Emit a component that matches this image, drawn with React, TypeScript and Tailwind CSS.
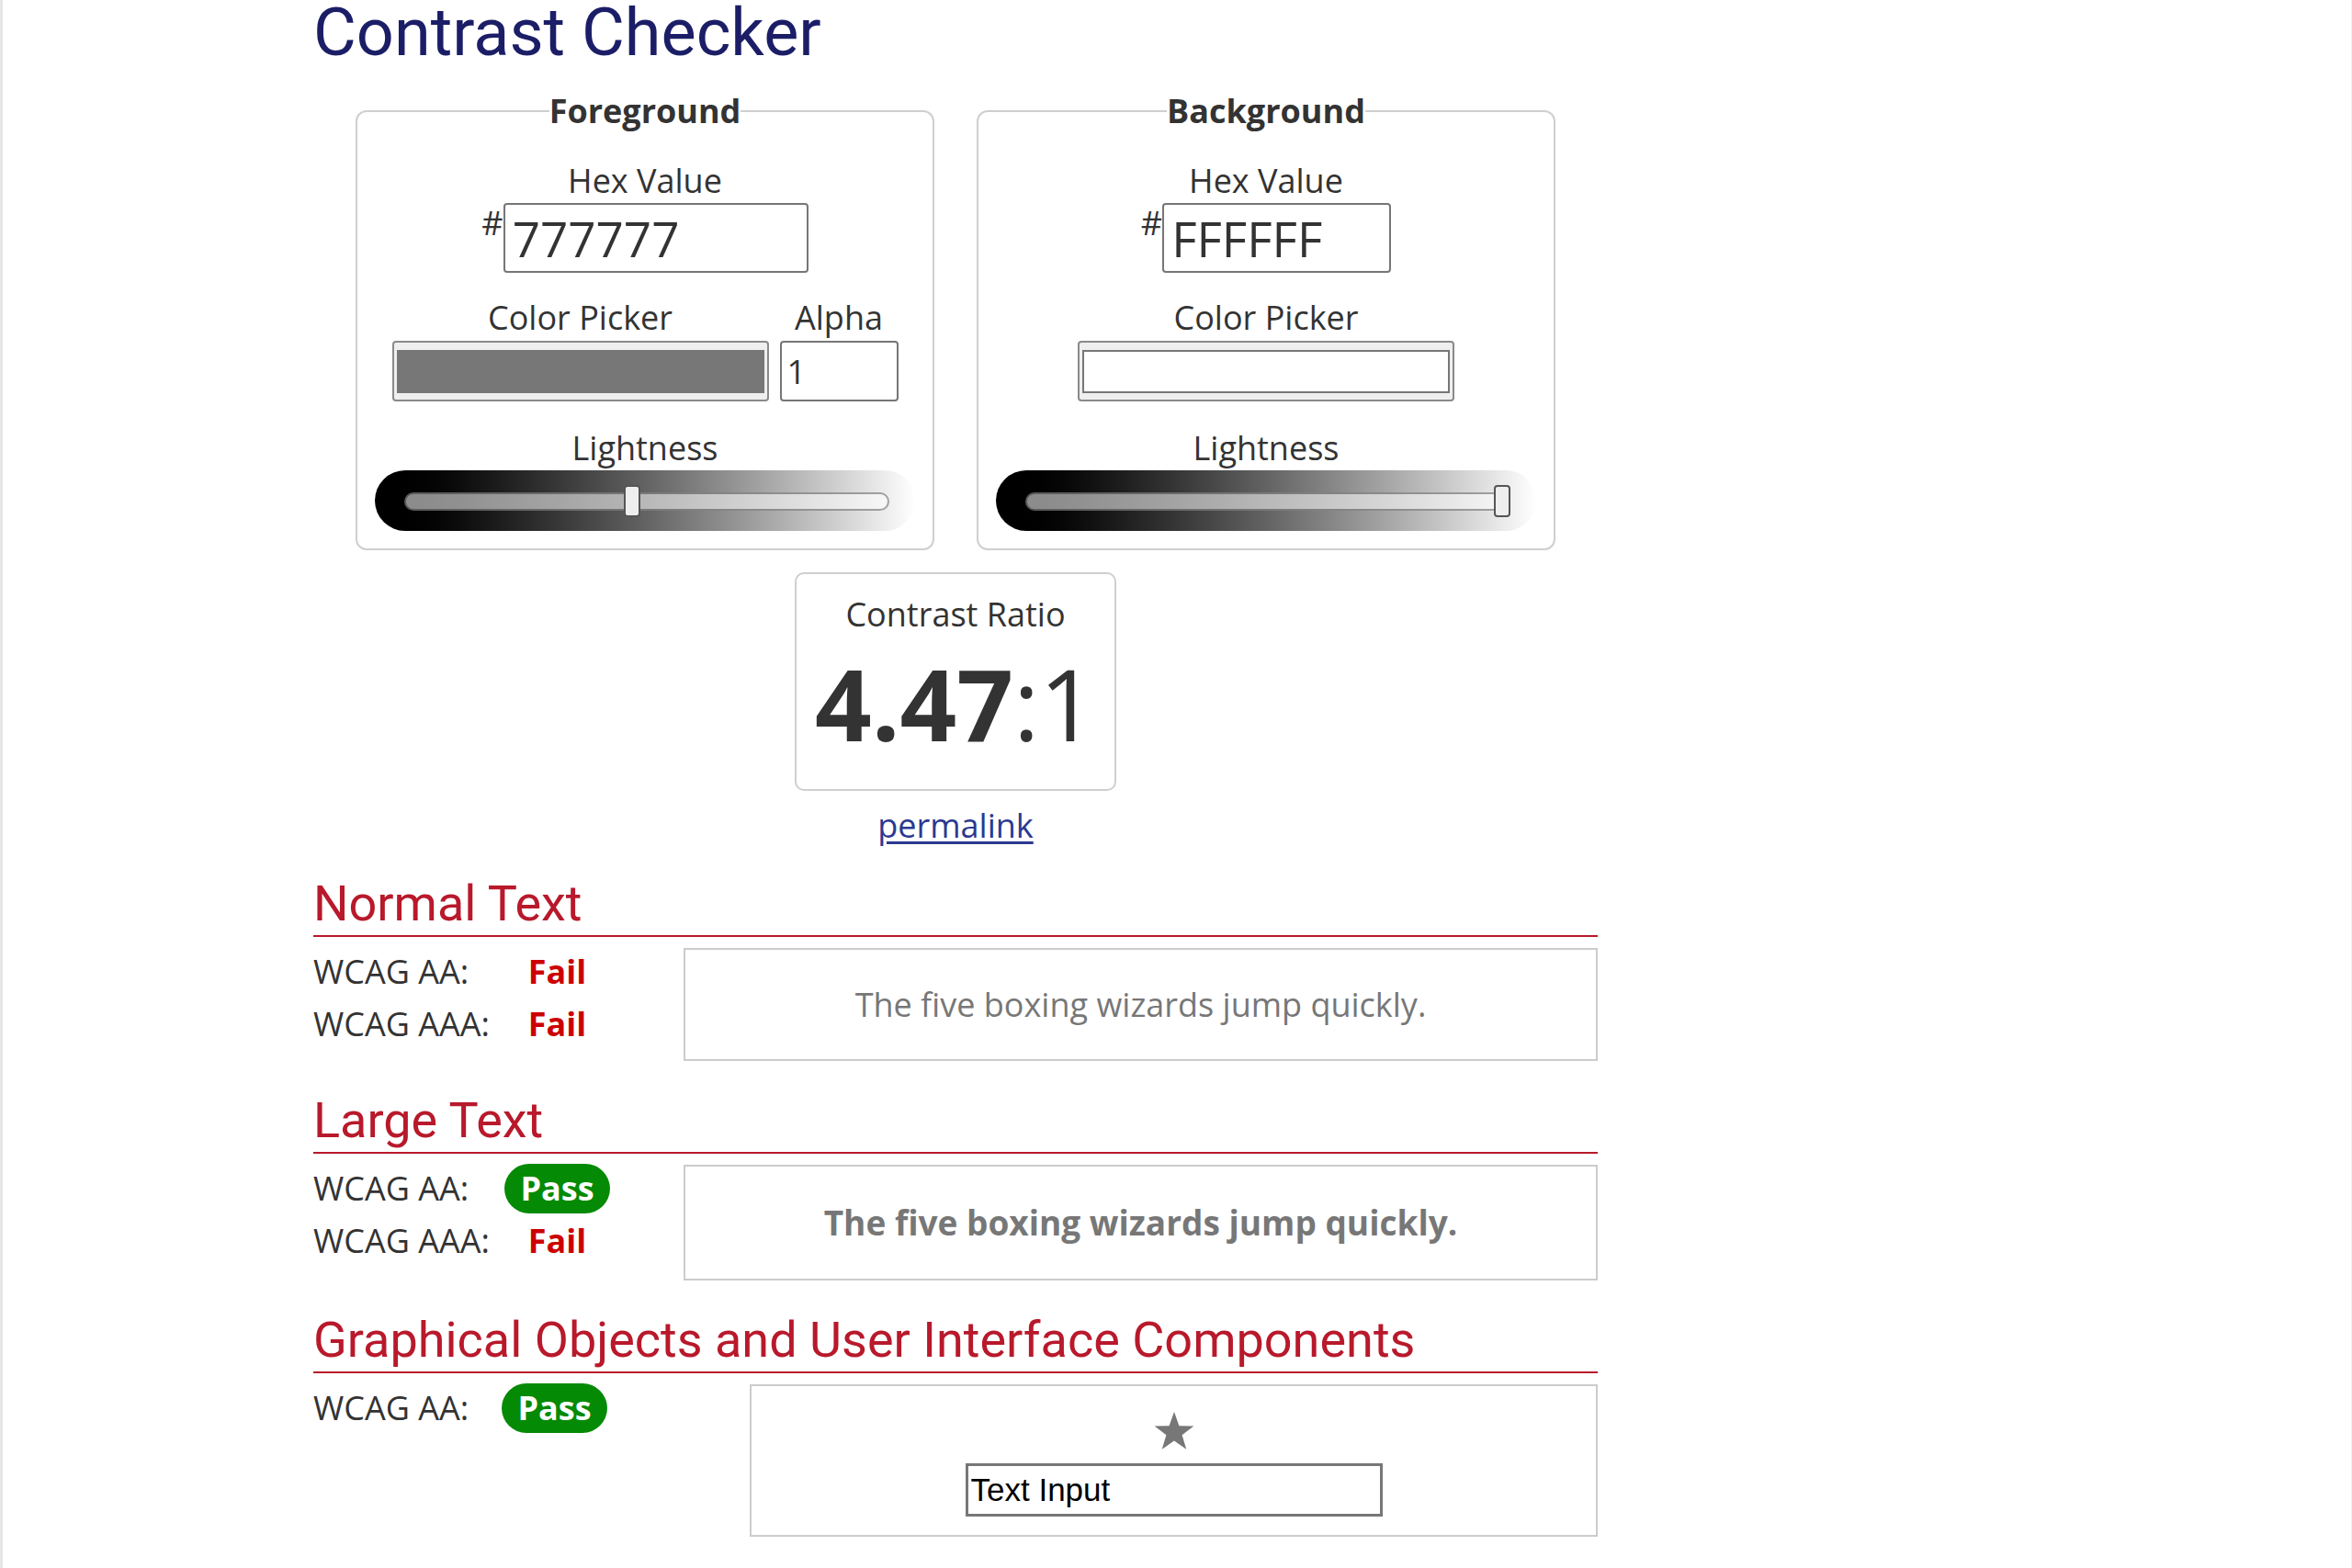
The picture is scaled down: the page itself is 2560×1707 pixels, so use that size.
import type { ReactNode } from 'react';

type PanelProps = {
  title: string;
  hex: string;
  hexWidth: number;
  lightness: number;
  showAlpha?: boolean;
};

const RED = 'text-[#b8192b]';

// Gradient lightness slider with a translucent track and a thumb placed from the value
function LightnessSlider({ value }: { value: number }) {
  return (
    <div className="h-[66px] w-full rounded-full bg-linear-to-r from-black to-white pl-[32px] pr-[28px] pt-[24px]">
      <div className="relative h-[20px] rounded-full border-2 border-black/35 bg-white/55">
        <div
          className="absolute top-[-10px] h-[35px] w-[18px] rounded-[4px] border-2 border-[#555] bg-[#eee]"
          style={{ left: `calc((100% - 16px) * ${value})` }}
        />
      </div>
    </div>
  );
}

function ColorPanel({ title, hex, hexWidth, lightness, showAlpha }: PanelProps) {
  return (
    <fieldset className="w-[630px] rounded-[12px] border-2 border-[#cfcfcf] px-[19px] pb-[19px] pt-[33px]">
      <legend className="mx-auto px-0 text-[36px] font-bold leading-[44px] text-[#333]">{title}</legend>
      <div className="flex flex-col items-center">
        <label className="leading-[41px]">Hex Value</label>
        <div className="mt-[4px] flex items-start">
          <span className="mt-[1px] leading-[41px]">#</span>
          <input
            readOnly
            value={hex}
            className="h-[76px] rounded-[4px] border-2 border-[#767676] bg-white pl-[8px] text-[53px] leading-none text-[#333] outline-none"
            style={{ width: hexWidth }}
          />
        </div>

        <div className="mt-[28px] flex gap-[12px]">
          <div className="flex flex-col items-center">
            <span className="leading-[41px]">Color Picker</span>
            <div className="mt-[5px] flex h-[66px] w-[410px] items-center rounded-[4px] border-2 border-[#8a8a8a] bg-[#efefef] px-[3px]">
              <div className="h-[47px] w-full border-2 border-[#777]" style={{ backgroundColor: `#${hex}` }} />
            </div>
          </div>
          {showAlpha && (
            <div className="flex flex-col items-center">
              <span className="leading-[41px]">Alpha</span>
              <input
                readOnly
                value="1"
                className="mt-[5px] h-[66px] w-[129px] rounded-[4px] border-2 border-[#767676] bg-white pl-[6px] text-[36px] text-[#333] outline-none"
              />
            </div>
          )}
        </div>

        <span className="mt-[30px] leading-[41px]">Lightness</span>
        <div className="mt-[4px] w-full">
          <LightnessSlider value={lightness} />
        </div>
      </div>
    </fieldset>
  );
}

function Pass() {
  return (
    <span className="flex h-[54px] w-[115px] items-center justify-center rounded-full bg-[#058a05] font-bold text-white">
      Pass
    </span>
  );
}

function Fail() {
  return <span className="font-bold text-[#cc0000]">Fail</span>;
}

function ResultRow({ level, result, narrow }: { level: string; result: ReactNode; narrow?: boolean }) {
  return (
    <div className="flex h-[57px] items-center">
      <span className={narrow ? 'w-[205px]' : 'w-[208px]'}>{level}</span>
      <span className="flex w-[115px] justify-center">{result}</span>
    </div>
  );
}

function Section({ title, rows, children, boxGap }: { title: string; rows: ReactNode; children: ReactNode; boxGap: string }) {
  return (
    <section className="mt-[38px]">
      <h2 className={`border-b-2 border-[#b8192b] pb-[7px] font-['Roboto',sans-serif] text-[54px] leading-none ${RED}`}>
        {title}
      </h2>
      <div className="mt-[9px] flex items-start">
        <div className="flex w-[323px] flex-col">{rows}</div>
        <div className={`mt-[3px] flex-1 border-2 border-[#cccccc] ${boxGap}`}>{children}</div>
      </div>
    </section>
  );
}

export default function App() {
  return (
    <div className="min-h-[1707px] w-full border-l-[3px] border-r border-l-[#e6e6e6] border-r-[#f0f0f0] bg-white font-['Open_Sans',sans-serif] text-[36px] text-[#333]">
      <main className="ml-[338px] w-[1398px]">
        <h1 className="font-['Roboto',sans-serif] text-[72px] leading-none text-[#1b1e66]">Contrast Checker</h1>

        <div className="mt-[27px] flex justify-center gap-[46px]">
          <ColorPanel title="Foreground" hex="777777" hexWidth={332} lightness={0.467} showAlpha />
          <ColorPanel title="Background" hex="FFFFFF" hexWidth={249} lightness={1} />
        </div>

        <div className="mt-[24px] flex flex-col items-center">
          <div className="w-[350px] rounded-[10px] border-2 border-[#cfcfcf] pb-[39px] pt-[23px] text-center">
            <div className="leading-[41px]">Contrast Ratio</div>
            <div className="mt-[23px] text-[108px] leading-none">
              <span className="font-bold">4.47</span>:1
            </div>
          </div>
          <a href="#" className="mt-[17px] leading-[41px] text-[#2b3990] underline underline-offset-[4px]">
            permalink
          </a>
        </div>

        <div className="mt-[1px]">
          <Section
            title="Normal Text"
            boxGap="ml-[80px]"
            rows={
              <>
                <ResultRow level="WCAG AA:" result={<Fail />} />
                <ResultRow level="WCAG AAA:" result={<Fail />} />
              </>
            }
          >
            <p className="py-[39px] text-center leading-[41px] text-[#777]">The five boxing wizards jump quickly.</p>
          </Section>

          <Section
            title="Large Text"
            boxGap="ml-[80px]"
            rows={
              <>
                <ResultRow level="WCAG AA:" result={<Pass />} />
                <ResultRow level="WCAG AAA:" result={<Fail />} />
              </>
            }
          >
            <p className="py-[39px] text-center text-[37px] font-bold leading-[44px] text-[#777]">
              The five boxing wizards jump quickly.
            </p>
          </Section>

          <Section
            title="Graphical Objects and User Interface Components"
            boxGap="ml-[152px]"
            rows={<ResultRow level="WCAG AA:" result={<Pass />} narrow />}
          >
            <div className="flex flex-col items-center pb-[20px] pt-[28px]">
              <svg width="46" height="43" viewBox="0 0 24 23" aria-hidden>
                <polygon
                  points="12,0 14.9,8.1 23.4,8.3 16.6,13.5 19.1,21.8 12,16.9 4.9,21.8 7.4,13.5 0.6,8.3 9.1,8.1"
                  fill="#777"
                />
              </svg>
              <input
                readOnly
                value="Text Input"
                className="mt-[13px] h-[58px] w-[454px] border-[3px] border-[#777] bg-white px-[3px] font-['Liberation_Sans',Arial,sans-serif] text-[35px] text-black outline-none"
              />
            </div>
          </Section>
        </div>
      </main>
    </div>
  );
}
